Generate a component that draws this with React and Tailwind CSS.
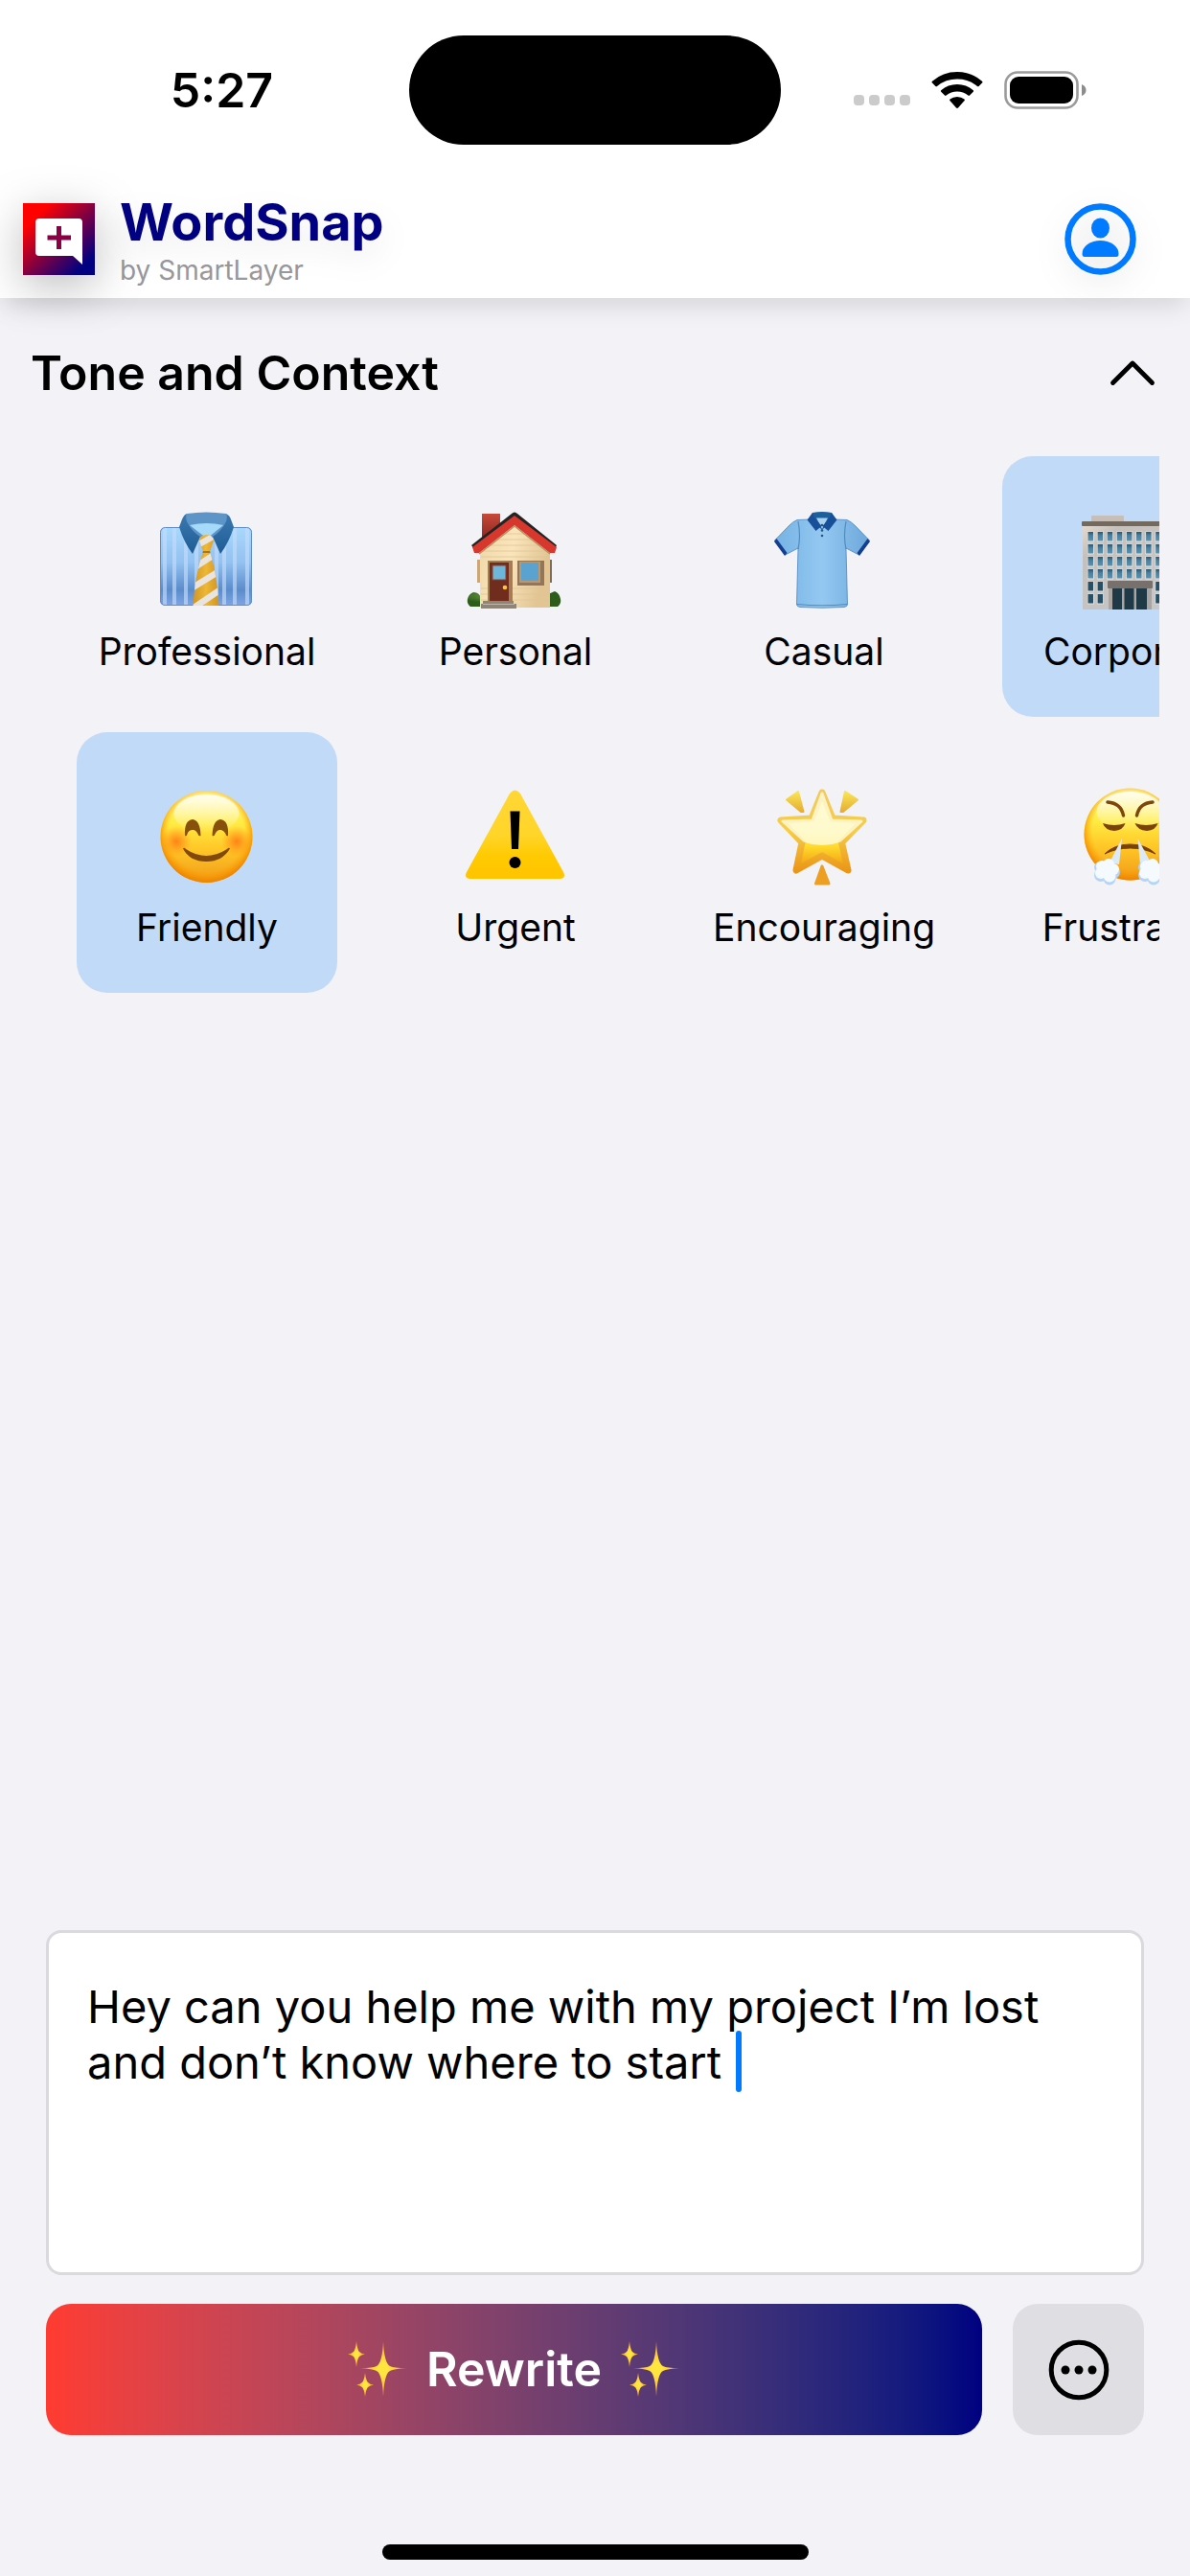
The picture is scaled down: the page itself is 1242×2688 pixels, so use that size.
import { useId, useState } from "react";

function TimeIcons() {
  return (
    <div className="flex items-center">
      <div className="mt-5 mr-[22px] flex gap-[5px]" aria-hidden="true">
        {[0, 1, 2, 3].map((n) => (
          <span key={n} className="size-[11px] rounded-sm bg-[#cbcbcb]" />
        ))}
      </div>
      <svg className="mr-[22px] h-10 w-[54px]" viewBox="0 0 54 40" aria-hidden="true">
        <path d="M1 12.6Q0 11.600 1 10.700Q12 1 27 1Q42 1 53 10.700Q54 11.600 53 12.600L49.600 16Q48.800 16.600 48 16Q39 8.600 27 8.600Q15 8.600 6 16Q5.200 16.600 4.400 16Z" />
        <path d="M10.200 21.800Q9.400 21 10.200 20.200Q17.400 14 27 14Q36.600 14 43.800 20.200Q44.600 21 43.800 21.800L40 25.600Q39.200 26.200 38.400 25.600Q33.400 21.600 27 21.600Q20.600 21.600 15.600 25.600Q14.800 26.200 14 25.600Z" />
        <path d="M19.400 31Q18.700 30.200 19.500 29.500Q22.600 27 27 27Q31.400 27 34.500 29.500Q35.300 30.200 34.600 31L28 38.500Q27 39.300 26 38.500Z" />
      </svg>
      <svg className="h-10 w-[86px]" viewBox="0 0 86 40" aria-hidden="true">
        <rect x="1.500" y="1.500" width="75" height="37" rx="12.500" fill="none" stroke="#9b9b9b" strokeWidth="2.600" />
        <rect x="6" y="6" width="66" height="28" rx="9" />
        <path d="M81 14q4.500 2 4.500 6t-4.500 6z" fill="#8c8c8c" />
      </svg>
    </div>
  );
}

function Logo() {
  return (
    <svg
      className="size-[75px] shrink-0 drop-shadow-[0_12px_24px_rgba(0,0,0,0.26)]"
      viewBox="0 0 75 75"
      aria-hidden="true"
    >
      <defs>
        <linearGradient id="logo" x1="0" y1="0" x2="1" y2="1">
          <stop offset="0.180" stopColor="#ff0000" />
          <stop offset="0.860" stopColor="#000080" />
        </linearGradient>
      </defs>
      <rect width="75" height="75" fill="url(#logo)" />
      <path d="M17 16H58Q62 16 62 20V64L52 55H17Q13 55 13 51V20Q13 16 17 16Z" fill="#fff" />
      <path d="M37.500 24V48M25.500 36H50" fill="none" stroke="#8b0045" strokeWidth="5" />
    </svg>
  );
}

function Necktie() {
  return (
    <>
      <defs>
        <linearGradient id="cloth" x1="0" y1="0" x2="0" y2="1">
          <stop offset="0" stopColor="#a9d8fc" />
          <stop offset="0.450" stopColor="#93c1f1" />
          <stop offset="0.800" stopColor="#5a8ccb" />
          <stop offset="1" stopColor="#7fa5e4" />
        </linearGradient>
        <linearGradient id="collar" x1="0" y1="0" x2="0" y2="1">
          <stop offset="0" stopColor="#3c78b0" />
          <stop offset="1" stopColor="#1f5c95" />
        </linearGradient>
        <linearGradient id="gold" x1="0" y1="0" x2="1" y2="0">
          <stop offset="0" stopColor="#c98d22" />
          <stop offset="0.500" stopColor="#eeb735" />
          <stop offset="1" stopColor="#c88b1e" />
        </linearGradient>
        <clipPath id="tie">
          <path d="M48 43H55Q63 70 64.500 100H37.500Q39 70 48 43ZM44 32Q45 26 51.500 26Q58 26 59 32L55 44H48Z" />
        </clipPath>
      </defs>
      <rect x="3" y="18" width="96" height="82" rx="5" fill="url(#cloth)" />
      <g fill="#c5dcfb" opacity="0.650">
        {[6, 16, 28, 39, 60, 68, 79, 92].map((x) => (
          <rect key={x} x={x} y="19" width="4" height="80" />
        ))}
      </g>
      <rect x="3.500" y="18.500" width="95" height="81" rx="5" fill="none" stroke="#5f8bc6" />
      <path d="M31 4Q51 1 72 4L79 17L52 32L24 17Z" fill="#5d95c8" />
      <path d="M34 16Q52 12 69 16L52 30Z" fill="#a5dafb" />
      <path d="M31 4Q28 5 26 10L23 18Q28 34 37 46L45 28Q36 22 32 14Q29 9 31 4Z" fill="url(#collar)" />
      <path d="M72 4Q76 6 77 10L80 18Q75 34 66 46L58 28Q67 22 71 14Q74 9 72 4Z" fill="url(#collar)" />
      <g clipPath="url(#tie)">
        <rect x="34" y="24" width="34" height="78" fill="url(#gold)" />
        <path d="M40 38L62 26M36 62L64 44M34 83L68 62M34 105L68 82" stroke="#e9e4df" strokeWidth="6.500" />
        <path d="M46 44H58" stroke="#8d6425" strokeWidth="1.500" />
      </g>
    </>
  );
}

function House() {
  return (
    <>
      <defs>
        <linearGradient id="wall" x1="0" y1="0" x2="1" y2="0.300">
          <stop offset="0" stopColor="#eed7a8" />
          <stop offset="0.500" stopColor="#fae5bb" />
          <stop offset="1" stopColor="#e2c593" />
        </linearGradient>
        <linearGradient id="brick" x1="0" y1="0" x2="0" y2="1">
          <stop offset="0" stopColor="#c8493a" />
          <stop offset="1" stopColor="#7b1c18" />
        </linearGradient>
        <radialGradient id="bush" cx="0.400" cy="0.300">
          <stop offset="0" stopColor="#82b54a" />
          <stop offset="1" stopColor="#2d5c1b" />
        </radialGradient>
      </defs>
      <rect x="17" y="4" width="19" height="34" fill="url(#brick)" />
      <path d="M8 86Q15 86 16 93V101H5Q1 98 2 93Q3 88 8 86ZM93 85Q98 87 99 93Q100 98 96 101H86V88Z" fill="url(#bush)" />
      <rect x="12" y="52" width="4" height="24" fill="#cba777" />
      <rect x="86" y="52" width="4" height="24" fill="#806d55" />
      <path d="M15 43L51 14L88 43V102H15Z" fill="url(#wall)" />
      <path d="M40 25H62M32 31H70M25 37H77M18 43H85M16 49H87M16 82H87M16 88H87M16 94H87" stroke="#dfc497" strokeWidth="0.800" />
      <path d="M6 37L48 4Q51 1 54 4L95 37L93 41L51 8L9 41Z" fill="#252424" />
      <path d="M7 39L51 6L95 39L93 45H88L51 16L14 45H9Z" fill="#d8372e" />
      <path d="M14 46L51 17L88 46" fill="none" stroke="#b69164" strokeWidth="1.500" />
      <rect x="23" y="53" width="26" height="43" fill="#a67c55" />
      <rect x="25" y="55" width="20" height="41" fill="#702d1d" />
      <rect x="28" y="58" width="14" height="15" fill="#6db7dc" stroke="#943f28" />
      <circle cx="41" cy="81" r="2.300" fill="#ffc33e" />
      <rect x="54" y="53" width="28" height="26" fill="#93765a" />
      <rect x="56" y="54" width="22" height="22" fill="#b99770" />
      <rect x="58" y="55" width="18" height="19" fill="#5aa2cf" />
      <path d="M18 95H50V98H53V103H16V98H18Z" fill="#8e8478" />
      <path d="M18 98.500H51" stroke="#c0b5a7" />
    </>
  );
}

function Polo() {
  return (
    <>
      <defs>
        <linearGradient id="polo" x1="0" y1="0" x2="1" y2="0">
          <stop offset="0" stopColor="#76b2e4" />
          <stop offset="0.500" stopColor="#93c8f1" />
          <stop offset="1" stopColor="#6ca7db" />
        </linearGradient>
      </defs>
      <path d="M37 10L24 10.500Q20 12 15 17L0.500 32L11.500 47L25 40L23.500 99Q24 101 27 101.500Q50 103 73 101.500Q76 101 76.500 99L75 40L88.500 47L99.500 32L85 17Q80 12 76 10.500L63 10Z" fill="url(#polo)" stroke="#4c86bf" strokeWidth="0.800" />
      <path d="M25 12Q28 27 25 41M75 12Q72 27 75 41M24 98.500Q50 101 76 98.500" fill="none" stroke="#518bc2" strokeWidth="1.200" />
      <path d="M0 33L2.500 30L13.500 45L11 48ZM100 33L97.500 30L86.500 45L89 48Z" fill="#143f90" />
      <path d="M40 3Q50 1 60 3L62 9L50 21L38 9Z" fill="#1c5f9f" />
      <path d="M44 8.500H56L50 20Z" fill="#a9d2ee" />
      <path d="M40 3L34.500 10.500L43.500 22L49.500 17L42 8ZM60 3L65.500 10.500L56.500 22L50.500 17L58 8Z" fill="#174f98" />
      <g fill="#285486">
        <circle cx="50" cy="16" r="1.300" />
        <circle cx="50" cy="21.500" r="1.300" />
        <circle cx="50" cy="27" r="1.300" />
      </g>
    </>
  );
}

function Building() {
  const windows = [];
  for (let row = 0; row < 6; row++) {
    for (let col = 0; col < 9; col++) {
      if (row < 4 || col < 2 || col > 6) windows.push([col, row]);
    }
  }
  return (
    <>
      <defs>
        <linearGradient id="stone" x1="0" y1="0" x2="1" y2="1">
          <stop offset="0" stopColor="#e5d9ce" />
          <stop offset="0.200" stopColor="#c4c0bd" />
          <stop offset="1" stopColor="#c9c9ca" />
        </linearGradient>
        <linearGradient id="glass" x1="0" y1="0" x2="0" y2="1">
          <stop offset="0" stopColor="#2c566e" />
          <stop offset="0.400" stopColor="#4a809e" />
          <stop offset="1" stopColor="#5d91ad" />
        </linearGradient>
      </defs>
      <rect x="9" y="6" width="34" height="8" rx="1" fill="#c6beb7" />
      <rect x="0" y="16" width="99" height="88" fill="url(#stone)" />
      <rect x="-1" y="12" width="101" height="5" rx="1" fill="#74695f" />
      {windows.map(([col, row]) => (
        <g key={col + "-" + row}>
          <rect x={4.8 + col * 10.1} y={22.500 + row * 13} width="7" height="11" fill="#e5e4e2" />
          <rect x={5.5 + col * 10.1} y={23 + row * 13} width="5.500" height="9.500" fill={row > 3 ? "#284f64" : "url(#glass)"} />
        </g>
      ))}
      <rect x="27" y="80" width="45" height="24" fill="#aaa5a2" />
      <rect x="26" y="74" width="47" height="8" rx="1" fill="#77706d" />
      <path d="M31 82H41V104H31ZM43.500 82H53.500V104H43.500ZM56 82H67V104H56Z" fill="#203946" />
    </>
  );
}

function FaceFill() {
  return (
    <defs>
      <linearGradient id="face" x1="0" y1="0" x2="0" y2="1">
        <stop offset="0" stopColor="#fff79a" />
        <stop offset="0.350" stopColor="#ffec43" />
        <stop offset="0.620" stopColor="#ffc928" />
        <stop offset="1" stopColor="#f19a18" />
      </linearGradient>
      <radialGradient id="rim" cx="0.500" cy="0.460" r="0.530">
        <stop offset="0.780" stopColor="#ffa000" stopOpacity="0" />
        <stop offset="1" stopColor="#ef8500" />
      </radialGradient>
      <radialGradient id="blush">
        <stop offset="0" stopColor="#ff7a14" stopOpacity="0.900" />
        <stop offset="1" stopColor="#ff8a14" stopOpacity="0" />
      </radialGradient>
      <linearGradient id="shine" x1="0" y1="0" x2="0" y2="1">
        <stop offset="0" stopColor="#fff" stopOpacity="0.850" />
        <stop offset="1" stopColor="#fff" stopOpacity="0" />
      </linearGradient>
    </defs>
  );
}

function Smile() {
  return (
    <>
      <FaceFill />
      <circle cx="51.500" cy="53" r="48" fill="url(#face)" />
      <circle cx="51.500" cy="53" r="48" fill="url(#rim)" />
      <ellipse cx="51.500" cy="29" rx="34" ry="20" fill="url(#shine)" />
      <circle cx="20" cy="58" r="16" fill="url(#blush)" />
      <circle cx="83" cy="58" r="16" fill="url(#blush)" />
      <path d="M29 52Q28 36 37 35Q45 36 45.500 52Q43 53 42.500 50Q40 45.500 37 46Q33 46 31.500 50Q31 53 29 52ZM57.500 52Q58 36 66 35Q75 36 74 52Q72 53 71.500 50Q69 46 66 46Q63 45.500 60.500 50Q60 53 57.500 52Z" fill="#87500c" />
      <path d="M27 65.500Q28 64 30 66Q51 80 73 66Q75 64 76 65.500Q68 79 51.500 79Q34 79 27 65.500Z" fill="#81490c" />
    </>
  );
}

function Warning() {
  return (
    <>
      <defs>
        <linearGradient id="warn" x1="0" y1="0" x2="0" y2="1">
          <stop offset="0" stopColor="#ffd735" />
          <stop offset="0.500" stopColor="#ffd52a" />
          <stop offset="0.750" stopColor="#ffca00" />
          <stop offset="1" stopColor="#ffc400" />
        </linearGradient>
      </defs>
      <path d="M46 8Q51.500 1 57 8L102 90Q105 96 99 97H4Q-2 96 1 90Z" fill="url(#warn)" />
      <path d="M46.500 26.500H56.500L55 66H48Z" />
      <circle cx="51.500" cy="80" r="6" />
    </>
  );
}

function Star() {
  return (
    <>
      <defs>
        <linearGradient id="star" x1="0" y1="0" x2="0" y2="1">
          <stop offset="0" stopColor="#fff3a8" />
          <stop offset="0.500" stopColor="#fff17c" />
          <stop offset="0.700" stopColor="#ffd92a" />
          <stop offset="1" stopColor="#ee9311" />
        </linearGradient>
        <linearGradient id="ray" x1="0" y1="0" x2="0" y2="1">
          <stop offset="0" stopColor="#fae556" />
          <stop offset="1" stopColor="#e6ad32" />
        </linearGradient>
        <linearGradient id="edge" x1="0" y1="0" x2="0" y2="1">
          <stop offset="0" stopColor="#f2c95c" />
          <stop offset="0.500" stopColor="#f5cd48" />
          <stop offset="1" stopColor="#ec9617" />
        </linearGradient>
      </defs>
      <path d="M25 6L13 14.500L28 27H30.500ZM74 6L87 14.500L72 27H69.500Z" fill="url(#ray)" stroke="url(#ray)" strokeWidth="2" strokeLinejoin="round" />
      <path d="M50 84L43.500 102H57Z" fill="#ec9f22" stroke="#ec9f22" strokeWidth="3" strokeLinejoin="round" />
      <path d="M50 7L61 34L93 36L70.500 59L77 88L50 73L23 88L29 59L7 36L39 34Z" fill="url(#star)" stroke="url(#edge)" strokeWidth="7" strokeLinejoin="round" />
      <path d="M50 8L60 36L91 37L69 57Q50 64 31 57L9 37L40 36Z" fill="#fffde0" opacity="0.800" stroke="#fffce0" strokeWidth="3" strokeLinejoin="round" />
    </>
  );
}

function Steam() {
  return (
    <>
      <FaceFill />
      <circle cx="49.500" cy="50.500" r="48" fill="url(#face)" />
      <circle cx="49.500" cy="50.500" r="48" fill="url(#rim)" />
      <ellipse cx="49.500" cy="27" rx="35" ry="21" fill="url(#shine)" />
      <path d="M26 17Q40 18 42.500 31M73 17Q59 18 56.500 31" fill="none" stroke="#7d460b" strokeWidth="3.500" strokeLinecap="round" />
      <path d="M21 39Q33 43 44.500 39Q42 46.500 33 47Q23 46 21 39ZM54.500 39Q66 43 78.500 39Q76 46.500 67 47Q57 46 54.500 39Z" fill="#7b430b" />
      <path d="M23 71Q33 61 49.500 61Q66 61 76 71Q64 65 49.500 65Q35 65 23 71Z" fill="#78400d" stroke="#78400d" strokeLinejoin="round" />
      <path d="M41 55L38 82L28 80ZM57.500 55L60 82L71 80Z" fill="#dceaf8" />
      {[25, 71].map((x) => (
        <g key={x}>
          <g fill="#b5d5f5">
            <circle cx={x - 6} cy="93" r="7" />
            <circle cx={x + 3} cy="97" r="6.500" />
            <circle cx={x + 7} cy="90" r="7" />
            <circle cx={x - 7} cy="85" r="6" />
          </g>
          <g fill="#f5faff">
            <circle cx={x - 6} cy="91" r="6" />
            <circle cx={x + 3} cy="94" r="6.500" />
            <circle cx={x + 7} cy="87" r="6" />
            <circle cx={x - 5} cy="84" r="6" />
            <circle cx={x + 2} cy="82" r="6" />
            <circle cx={x + 1} cy="89" r="7" />
          </g>
        </g>
      ))}
    </>
  );
}

function Sparkles() {
  const fill = useId();
  return (
    <svg className="h-15 w-[62px]" viewBox="0 0 62 60" aria-hidden="true">
      <defs>
        <radialGradient id={fill}>
          <stop offset="0.200" stopColor="#ffe63f" />
          <stop offset="0.450" stopColor="#ffd23c" />
          <stop offset="1" stopColor="#ee9a35" />
        </radialGradient>
      </defs>
      <g fill={"url(#" + fill + ")"}>
        <path d="M37 0Q38 23 44 26Q48 28 61 28Q48 29 44 31Q38 34 37 58Q36 34 30 31Q26 29 13 28Q26 28 30 26Q36 23 37 0Z" />
        <path d="M9 0Q10 9 12 11Q14 13 18 13.500Q14 14 12 16Q10 18 9 27Q8 18 6 16Q4 14 0 13.500Q4 13 6 11Q8 9 9 0Z" />
        <path d="M18 33Q19 41 21 43Q23 45 27 45.500Q23 46 21 48Q19 50 18 58Q17 50 15 48Q13 46 9 45.500Q13 45 15 43Q17 41 18 33Z" />
      </g>
    </svg>
  );
}

const tones = [
  { name: "Professional", Art: Necktie },
  { name: "Friendly", Art: Smile },
  { name: "Personal", Art: House },
  { name: "Urgent", Art: Warning },
  { name: "Casual", Art: Polo },
  { name: "Encouraging", Art: Star },
  { name: "Corporate", Art: Building },
  { name: "Frustrated", Art: Steam },
];

export default function App() {
  const [selected, setSelected] = useState(["Friendly", "Corporate"]);
  const [message, setMessage] = useState(
    "Hey can you help me with my project I’m lost and don’t know where to start "
  );
  const toggle = (name) =>
    setSelected((list) => (list.includes(name) ? list.filter((n) => n !== name) : [...list, name]));

  return (
    <div className="flex min-h-screen flex-col bg-[#f2f2f7] font-['Inter','Liberation_Sans',sans-serif] text-black">
      <header className="relative bg-white shadow-[0_12px_24px_-4px_rgba(0,0,0,0.12)]">
        <div className="grid grid-cols-[1fr_388px_1fr] pt-[37px]">
          <div className="flex items-center justify-center pl-9 text-[50px] leading-[60px] font-semibold">5:27</div>
          <div className="h-[114px] rounded-full bg-black" />
          <div className="flex items-center justify-end pr-[108px]">
            <TimeIcons />
          </div>
        </div>
        <div className="flex items-center px-6 pt-12 pb-3">
          <Logo />
          <div className="ml-[26px]">
            <h1 className="text-[54px] leading-[66px] font-bold text-[#000080] drop-shadow-[0_12px_16px_rgba(0,0,0,0.08)]">
              WordSnap
            </h1>
            <p className="text-[28px] leading-[34px] text-[#98989d]">by SmartLayer</p>
          </div>
          <button
            type="button"
            aria-label="Account"
            className="mr-8 ml-auto drop-shadow-[0_10px_16px_rgba(0,0,0,0.1)]"
          >
            <svg className="size-[75px]" viewBox="0 0 75 75" fill="#007aff" aria-hidden="true">
              <circle cx="37.500" cy="37.500" r="34" fill="none" stroke="#007aff" strokeWidth="6.500" />
              <ellipse cx="37.500" cy="26" rx="9.500" ry="10.500" />
              <path d="M18.500 53Q18.500 47 24 43Q30 39 37.500 39Q45 39 51 43Q56.500 47 56.500 53Q56.500 56 54 56H21Q18.500 56 18.500 53Z" />
            </svg>
          </button>
        </div>
      </header>

      <main className="flex flex-1 flex-col">
        <div className="flex items-center justify-between pt-12 pr-9 pl-8">
          <h2 className="text-[50px] leading-[60px] font-semibold">Tone and Context</h2>
          <button type="button" aria-label="Collapse">
            <svg className="h-[28px] w-[48px]" viewBox="0 0 48 28" aria-hidden="true">
              <path d="M3.500 24.500L24 4L44.500 24.500" fill="none" stroke="#000" strokeWidth="4.800" strokeLinecap="round" strokeLinejoin="round" />
            </svg>
          </button>
        </div>

        <div className="mx-8 mt-[57px] grid auto-cols-[272px] grid-flow-col grid-rows-2 gap-x-[50px] gap-y-4 overflow-x-auto px-12 [scrollbar-width:none]">
          {tones.map(({ name, Art }) => (
            <button
              key={name}
              type="button"
              aria-pressed={selected.includes(name)}
              onClick={() => toggle(name)}
              className="flex h-[272px] flex-col items-center rounded-[32px] pt-14 aria-pressed:bg-[#c1daf8]"
            >
              <svg className="size-[104px] overflow-visible" viewBox="0 0 104 104" aria-hidden="true">
                <Art />
              </svg>
              <span className="mt-5 text-[39px] leading-[48px]">{name}</span>
            </button>
          ))}
        </div>

        <div className="mt-auto px-12">
          <div className="relative">
            <textarea
              aria-label="Message"
              spellCheck={false}
              value={message}
              onChange={(e) => setMessage(e.target.value)}
              className="block h-[360px] w-full resize-none rounded-2xl border-3 border-[#d9d9de] bg-white px-10 pt-12 text-[47px] leading-[58px] caret-[#007aff] outline-none"
            />
            <span className="absolute top-[105px] left-[720px] h-16 w-[6px] rounded-full bg-[#007aff]" />
          </div>
          <div className="mt-[30px] flex gap-8">
            <button
              type="button"
              className="flex h-[137px] flex-1 items-center justify-center gap-5 rounded-[26px] bg-linear-to-r from-[#ff3b30] to-[#000080] text-[50px] font-semibold text-white"
            >
              <Sparkles />
              Rewrite
              <Sparkles />
            </button>
            <button
              type="button"
              aria-label="More options"
              className="flex size-[137px] items-center justify-center rounded-[26px] bg-[#dedee3]"
            >
              <svg className="size-[64px]" viewBox="0 0 64 64" aria-hidden="true">
                <circle cx="32" cy="32" r="28.800" fill="none" stroke="#000" strokeWidth="5" />
                <circle cx="18" cy="32" r="4.500" />
                <circle cx="32" cy="32" r="4.500" />
                <circle cx="46" cy="32" r="4.500" />
              </svg>
            </button>
          </div>
        </div>
      </main>
      <div className="mx-auto mt-[114px] mb-[17px] h-4 w-[445px] rounded-full bg-black" />
    </div>
  );
}
